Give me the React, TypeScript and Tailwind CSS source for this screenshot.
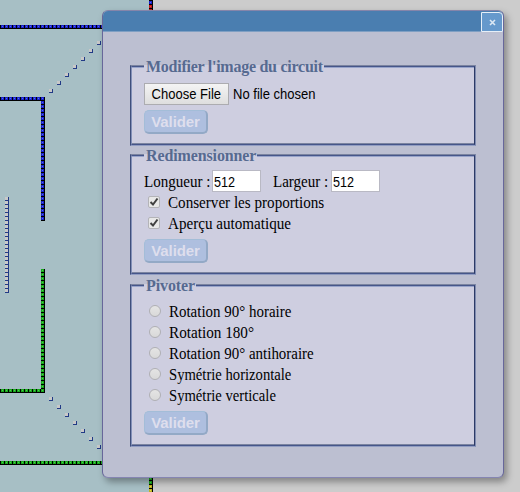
import React from 'react';

type Kind = 'blue' | 'green' | 'red' | 'yellow' | 'line';

function Tiles({ x, y, w, h, kind }: { x: number; y: number; w: number; h: number; kind: Kind }) {
  return <rect x={x} y={y} width={w} height={h} fill={`url(#${kind})`} />;
}

function TilePattern({ id, base, light }: { id: Kind; base: string; light: string }) {
  return (
    <pattern id={id} x="1" y="1" width="4" height="4" patternUnits="userSpaceOnUse">
      <rect width="4" height="4" fill="#000" />
      <rect width="3" height="3" fill={base} />
      <rect x="1" y="1" width="1" height="1" fill={light} />
    </pattern>
  );
}

function Circuit() {
  const steps = [0, 1, 2, 3, 4, 5, 6];
  return (
    <svg className="absolute left-0 top-0 block" width="153" height="492" shapeRendering="crispEdges">
      <defs>
        <TilePattern id="blue" base="#1a22cc" light="#5868f0" />
        <TilePattern id="green" base="#18a81c" light="#48d048" />
        <TilePattern id="red" base="#c01c1c" light="#e84040" />
        <TilePattern id="yellow" base="#c0b420" light="#e0dc50" />
        <pattern id="line" x="1" y="1" width="4" height="4" patternUnits="userSpaceOnUse">
          <rect width="4" height="4" fill="#213a86" />
          <rect width="3" height="3" fill="#c8c8c8" />
        </pattern>
      </defs>
      <rect width="153" height="492" fill="#a7bfc5" />
      <Tiles x={0} y={25} w={153} h={4} kind="blue" />
      <Tiles x={0} y={97} w={45} h={4} kind="blue" />
      <Tiles x={41} y={97} w={4} h={124} kind="blue" />
      <Tiles x={41} y={269} w={4} h={124} kind="green" />
      <Tiles x={0} y={389} w={45} h={4} kind="green" />
      <Tiles x={0} y={461} w={153} h={4} kind="green" />
      <Tiles x={149} y={0} w={4} h={5} kind="blue" />
      <Tiles x={149} y={5} w={4} h={12} kind="red" />
      <Tiles x={149} y={465} w={4} h={20} kind="green" />
      <Tiles x={149} y={485} w={4} h={7} kind="yellow" />
      <Tiles x={5} y={197} w={4} h={96} kind="line" />
      {steps.map((i) => (
        <React.Fragment key={i}>
          <Tiles x={49 + i * 8} y={89 - i * 8} w={4} h={4} kind="line" />
          <Tiles x={49 + i * 8} y={397 + i * 8} w={4} h={4} kind="line" />
        </React.Fragment>
      ))}
    </svg>
  );
}

function Group({ title, className, legendClass, children }: { title: string; className: string; legendClass: string; children: React.ReactNode }) {
  return (
    <section className={`w-[346px] border border-t-[#7b84a0] border-l-[#3f4f7c] border-r-[#7f8bb0] border-b-[#919dc2] ${className}`}>
      <div className="h-full border border-t-[#46568a] border-l-[#8390b8] border-r-[#2c3a66] border-b-[#46568a]">
        <div className="h-full border-y border-t-[#98a4ca] border-b-[#7b84a0] bg-[#cecee0] pl-3">
          <h2 className={`relative -mt-[3px] h-[3px] bg-[#cecee0] pl-0.5 text-base font-bold text-[#566a90] ${legendClass}`}>
            <span className="block -translate-y-[8px] whitespace-nowrap leading-5">{title}</span>
          </h2>
          {children}
        </div>
      </div>
    </section>
  );
}

function Submit() {
  return (
    <button className="block h-6 w-16 rounded-[5px] border border-[#a3bdd8] border-r-2 border-b-2 border-r-[#93a9c6] border-b-[#93a9c6] bg-[#aebfdf] text-center font-['Liberation_Sans',sans-serif] text-[15px] leading-[21px] font-bold tracking-[-0.1px] text-[#dedeed]">
      Valider
    </button>
  );
}

function Check({ label }: { label: string }) {
  return (
    <label className="flex h-[21px] items-center">
      <span className="mr-2 ml-1 -mt-[3px] flex size-3 items-center justify-center rounded-[2px] border border-[#b4b4b8] bg-[#e8e8e8]">
        <svg width="10" height="10" viewBox="0 0 10 10" fill="none" stroke="#404040" strokeWidth="2">
          <path d="M1.5 5 4 7.5 8.5 1.5" />
        </svg>
      </span>
      <span className="-mt-0.5 origin-left scale-x-[0.945]">{label}</span>
    </label>
  );
}

function Radio({ label, className = 'scale-x-[0.935]' }: { label: string; className?: string }) {
  return (
    <label className="flex h-[21px] items-center">
      <span className="mr-2 ml-[5px] -mt-[3px] size-3 rounded-full border border-[#b0b0b4] bg-linear-to-b from-[#e4e4e4] to-[#d9d9d9]" />
      <span className={`-mt-0.5 origin-left ${className}`}>{label}</span>
    </label>
  );
}

function NumberField({ label, className }: { label: string; className: string }) {
  return (
    <label className={`flex items-center ${className}`}>
      <span className="min-w-0 flex-1 origin-left scale-x-[0.94] whitespace-nowrap pt-px">{label}</span>
      <span className="flex h-[22px] w-[49px] shrink-0 items-center border border-[#b9b9c4] bg-white pt-px pl-px font-['Liberation_Sans',sans-serif] text-[14px] text-black">
        <span className="origin-left scale-x-[0.9]">512</span>
      </span>
    </label>
  );
}

export default function App() {
  return (
    <div className="relative h-[492px] w-[520px] overflow-hidden bg-[#cccccc] font-['Liberation_Serif',serif] text-base leading-5 text-black">
      <Circuit />
      <main className="relative mt-[10px] ml-[102px] h-[468px] w-[402px] overflow-visible rounded-[6px] border border-[#67679a] border-t-[#8585aa] border-b-[#8585b2] bg-[#bcbfd1] shadow-[3px_4px_7px_rgba(0,0,0,0.35)]">
        <header className="flex h-[21px] justify-end rounded-t-[5px] border-b border-[#7f9fc3] bg-[#4a7eb0]">
          <button className="mt-px flex h-5 w-[22px] shrink-0 items-center justify-center rounded-tr-[4px] border border-[#e6eff8] bg-[#6699cc]">
            <svg width="7" height="7" viewBox="0 0 7 7" stroke="#dce8f4" strokeWidth="1.6">
              <path d="M1 1 6 6M6 1 1 6" />
            </svg>
          </button>
        </header>
        <div className="flex flex-col pt-[33px] pl-[27px]">
          <Group title="Modifier l'image du circuit" className="h-[81px]" legendClass="w-[180px] tracking-[-0.26px]">
            <div className="mt-[15px] flex h-[22px] items-center font-['Liberation_Sans',sans-serif] text-[14px]">
              <button className="flex h-[22px] w-[85px] items-center justify-center border border-[#acacb0] bg-linear-to-b from-[#f4f4f4] to-[#dedede] leading-5">
                <span className="scale-x-[0.93] whitespace-nowrap">Choose File</span>
              </button>
              <span className="ml-1 origin-left scale-x-[0.93]">No file chosen</span>
            </div>
            <div className="mt-[5px]"><Submit /></div>
          </Group>
          <Group title="Redimensionner" className="mt-2 h-[121px]" legendClass="w-[113px] tracking-[-0.12px]">
            <div className="mt-[13px] flex h-[22px]">
              <NumberField label="Longueur :" className="w-[117px]" />
              <NumberField label="Largeur :" className="ml-3 w-[107px]" />
            </div>
            <div className="pt-px">
              <Check label="Conserver les proportions" />
              <Check label="Aperçu automatique" />
            </div>
            <div className="mt-1"><Submit /></div>
          </Group>
          <Group title="Pivoter" className="mt-[9px] h-[163px]" legendClass="w-[52px] tracking-[-0.1px]">
            <div className="pt-[15px]">
              <Radio label="Rotation 90° horaire" />
              <Radio label="Rotation 180°" className="scale-x-[0.95]" />
              <Radio label="Rotation 90° antihoraire" />
              <Radio label="Symétrie horizontale" className="scale-x-[0.915]" />
              <Radio label="Symétrie verticale" className="scale-x-[0.915]" />
            </div>
            <div className="mt-1"><Submit /></div>
          </Group>
        </div>
      </main>
    </div>
  );
}
